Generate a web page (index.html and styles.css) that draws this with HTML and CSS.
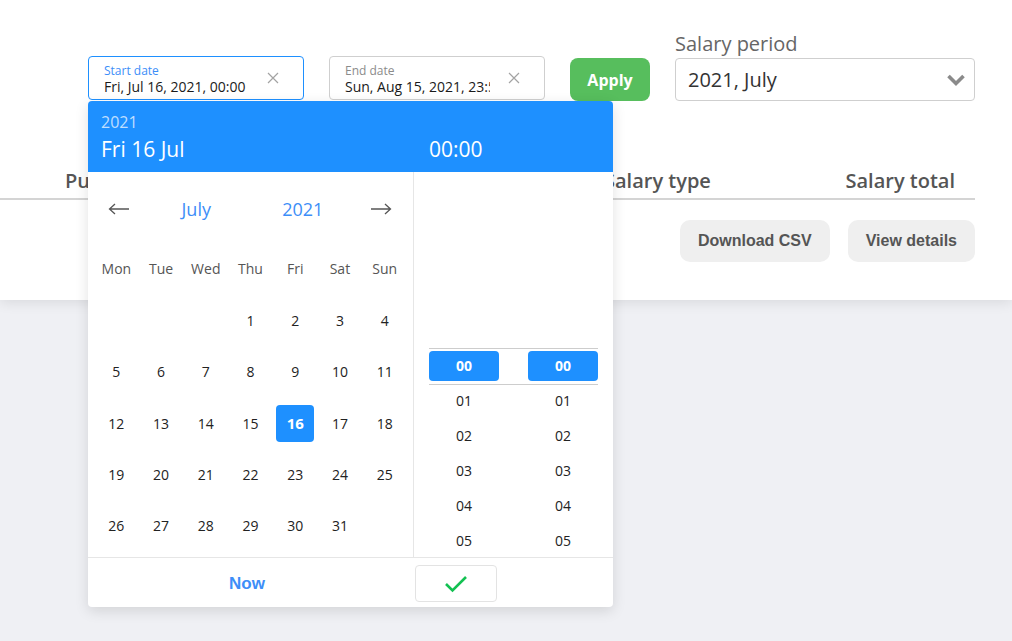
FILE: index.html
```html
<!DOCTYPE html>
<html>
<head>
<meta charset="utf-8">
<link rel="stylesheet" href="styles.css">
</head>
<body>
<div class="page">
<div class="card">
  <div class="filters">
    <div class="date-input active">
      <div class="di-text">
        <div class="di-label">Start date</div>
        <div class="di-value">Fri, Jul 16, 2021, 00:00</div>
      </div>
      <svg class="di-clear" width="12" height="12" viewBox="0 0 12 12"><path d="M1 1L11 11M11 1L1 11" stroke="#a3a3a3" stroke-width="1.2" fill="none"/></svg>
    </div>
    <div class="date-input">
      <div class="di-text">
        <div class="di-label gray">End date</div>
        <div class="di-value">Sun, Aug 15, 2021, 23:59</div>
      </div>
      <svg class="di-clear" width="12" height="12" viewBox="0 0 12 12"><path d="M1 1L11 11M11 1L1 11" stroke="#a3a3a3" stroke-width="1.2" fill="none"/></svg>
    </div>
    <button class="apply">Apply</button>
    <div class="period">
      <div class="period-label">Salary period</div>
      <div class="select">
        <span>2021, July</span>
        <svg width="20" height="14" viewBox="0 0 20 14"><path d="M2.5 3L10 10.5L17.5 3" stroke="#8a8a8a" stroke-width="3.6" fill="none"/></svg>
      </div>
    </div>
  </div>

  <div class="thead">
    <div>Purpose</div>
    <div>Salary type</div>
    <div>Salary total</div>
  </div>

  <div class="actions">
    <button class="gbtn">Download CSV</button>
    <button class="gbtn">View details</button>
  </div>
</div>

<div class="picker">
  <div class="p-head">
    <div class="p-date">
      <div class="p-year">2021</div>
      <div class="p-day">Fri 16 Jul</div>
    </div>
    <div class="p-time">00:00</div>
  </div>
  <div class="p-body">
    <div class="cal">
      <div class="nav">
        <svg width="22" height="12" viewBox="0 0 22 12"><path d="M21 6H1.5M7 1L1.5 6L7 11" stroke="#555" stroke-width="1.3" fill="none"/></svg>
        <span>July</span>
        <span>2021</span>
        <svg width="22" height="12" viewBox="0 0 22 12"><path d="M1 6H20.5M15 1L20.5 6L15 11" stroke="#555" stroke-width="1.3" fill="none"/></svg>
      </div>
      <div class="wdays">
        <span>Mon</span><span>Tue</span><span>Wed</span><span>Thu</span><span>Fri</span><span>Sat</span><span>Sun</span>
      </div>
      <div class="days">
        <span></span><span></span><span></span><span>1</span><span>2</span><span>3</span><span>4</span>
        <span>5</span><span>6</span><span>7</span><span>8</span><span>9</span><span>10</span><span>11</span>
        <span>12</span><span>13</span><span>14</span><span>15</span><span class="sel"><b>16</b></span><span>17</span><span>18</span>
        <span>19</span><span>20</span><span>21</span><span>22</span><span>23</span><span>24</span><span>25</span>
        <span>26</span><span>27</span><span>28</span><span>29</span><span>30</span><span>31</span><span></span>
      </div>
    </div>
    <div class="time">
      <div class="tcol">
        <span class="sel"><b>00</b></span><span>01</span><span>02</span><span>03</span><span>04</span><span>05</span>
      </div>
      <div class="tcol">
        <span class="sel"><b>00</b></span><span>01</span><span>02</span><span>03</span><span>04</span><span>05</span>
      </div>
    </div>
  </div>
  <div class="p-foot">
    <div class="now">Now</div>
    <div class="ok-wrap">
      <button class="ok">
        <svg width="24" height="18" viewBox="0 0 24 18"><path d="M2 9L8.5 15.5L22 2" stroke="#13c152" stroke-width="2.6" fill="none"/></svg>
      </button>
    </div>
  </div>
</div>
</div>
</body>
</html>
```

FILE: styles.css
```css
* { box-sizing: border-box; }
html, body { height: 100%; }
body {
  margin: 0;
  background: #eff0f4;
  font-family: "Open Sans", "Noto Sans", sans-serif;
  color: #222;
}
button { font-family: inherit; cursor: pointer; }

.page {
  position: relative;
  height: 641px;
}

.card {
  background: #fff;
  height: 300px;
  padding: 31px 37px 0 0;
  box-shadow: 0 3px 12px rgba(0, 0, 0, 0.09);
}

.filters {
  display: flex;
  align-items: flex-end;
  gap: 25px;
  padding-left: 88px;
}
.date-input {
  width: 216px;
  height: 44px;
  margin-bottom: 1px;
  border: 1px solid #cfcfcf;
  border-radius: 4px;
  display: flex;
  align-items: center;
  padding: 0 0 0 15px;
  gap: 18px;
}
.date-input.active { border-color: #1e90ff; }
.di-text { width: 145px; overflow: hidden; white-space: nowrap; padding-top: 3px; }
.di-label { font-size: 12px; line-height: 15px; color: #3d8ef8; }
.di-label.gray { color: #8b8b8b; }
.di-value { font-size: 14px; line-height: 18px; color: #1a1a1a; }
.di-clear { flex: none; }

.apply {
  width: 80px;
  height: 43px;
  border: none;
  border-radius: 8px;
  background: #57be5d;
  color: #fff;
  font-size: 16px;
  font-weight: 700;
}

.period { width: 300px; }
.period-label { font-size: 20px; line-height: 26px; color: #666; margin-bottom: 1px; }
.select {
  height: 43px;
  border: 1px solid #cfcfcf;
  border-radius: 4px;
  display: flex;
  align-items: center;
  justify-content: space-between;
  padding: 0 8px 0 12px;
  font-size: 20px;
  color: #333;
}

.thead {
  margin-top: 67px;
  width: 975px;
  display: grid;
  grid-template-columns: 539px 1fr auto;
  padding: 0 20px 4px 65px;
  border-bottom: 2px solid #d4d4d4;
  font-size: 20px;
  font-weight: 600;
  line-height: 26px;
  color: #555;
}

.actions {
  margin-top: 20px;
  display: flex;
  justify-content: flex-end;
  gap: 18px;
}
.gbtn {
  height: 42px;
  padding: 0 18px;
  border: none;
  border-radius: 10px;
  background: #efefef;
  color: #555;
  font-family: "Liberation Sans", Arial, sans-serif;
  font-size: 16px;
  font-weight: 700;
}

/* date picker popover */
.picker {
  position: absolute;
  left: 88px;
  top: 101px;
  width: 525px;
  background: #fff;
  border-radius: 4px;
  box-shadow: 0 4px 14px rgba(0, 0, 0, 0.12);
  overflow: hidden;
  z-index: 5;
}
.p-head {
  height: 71px;
  background: #1e90ff;
  color: #fff;
  display: grid;
  grid-template-columns: 326px 1fr;
  align-items: end;
  padding-bottom: 10px;
}
.p-date { padding-left: 13px; }
.p-year { font-size: 16px; line-height: 20px; color: rgba(255, 255, 255, 0.72); margin-bottom: 4px; }
.p-day, .p-time { font-size: 21px; line-height: 26px; }
.p-time { padding-left: 15px; }

.p-body {
  height: 385px;
  display: grid;
  grid-template-columns: 326px 1fr;
  overflow: hidden;
}
.cal {
  border-right: 1px solid #e6e6e6;
  padding: 0 6px;
}
.nav {
  height: 74px;
  display: grid;
  grid-template-columns: 49px 1fr 1fr 49px;
  align-items: center;
  justify-items: center;
  padding: 0 2px 0 0;
  font-size: 18px;
  color: #3d8ef8;
}
.wdays, .days {
  display: grid;
  grid-template-columns: repeat(7, 1fr);
  justify-items: center;
  align-items: center;
}
.wdays { height: 44px; font-size: 14px; color: #555; }
.days { margin-top: 5px; grid-auto-rows: 51.25px; font-size: 14px; color: #222; }
.days .sel {
  width: 38px;
  height: 37px;
  border-radius: 4px;
  background: #1e90ff;
  color: #fff;
  display: flex;
  align-items: center;
  justify-content: center;
  font-size: 15px;
}

.time {
  position: relative;
  display: grid;
  grid-template-columns: 70px 70px;
  column-gap: 29px;
  padding: 176px 0 0 15px;
  align-content: start;
}
.time::before {
  content: "";
  position: absolute;
  left: 15px;
  top: 176px;
  width: 169px;
  height: 35px;
  border-top: 1px solid #cdcdcd;
  border-bottom: 1px solid #cdcdcd;
}
.tcol { display: flex; flex-direction: column; }
.tcol span {
  height: 35px;
  display: flex;
  align-items: center;
  justify-content: center;
  font-size: 14px;
  color: #222;
}
.tcol .sel { position: relative; }
.tcol .sel b {
  width: 70px;
  height: 30px;
  border-radius: 4px;
  background: #1e90ff;
  color: #fff;
  display: flex;
  align-items: center;
  justify-content: center;
  font-size: 14px;
}

.p-foot {
  height: 50px;
  border-top: 1px solid #e6e6e6;
  display: grid;
  grid-template-columns: 326px 1fr;
}
.now {
  display: flex;
  align-items: center;
  justify-content: center;
  padding: 3px 8px 0 0;
  font-family: "Liberation Sans", Arial, sans-serif;
  font-size: 17px;
  font-weight: 700;
  color: #3d8ef8;
}
.ok-wrap { padding: 7px 0 0 1px; }
.ok {
  width: 82px;
  height: 37px;
  border: 1px solid #e3e3e3;
  border-radius: 4px;
  background: #fff;
  display: flex;
  align-items: center;
  justify-content: center;
  padding: 0;
}
```
